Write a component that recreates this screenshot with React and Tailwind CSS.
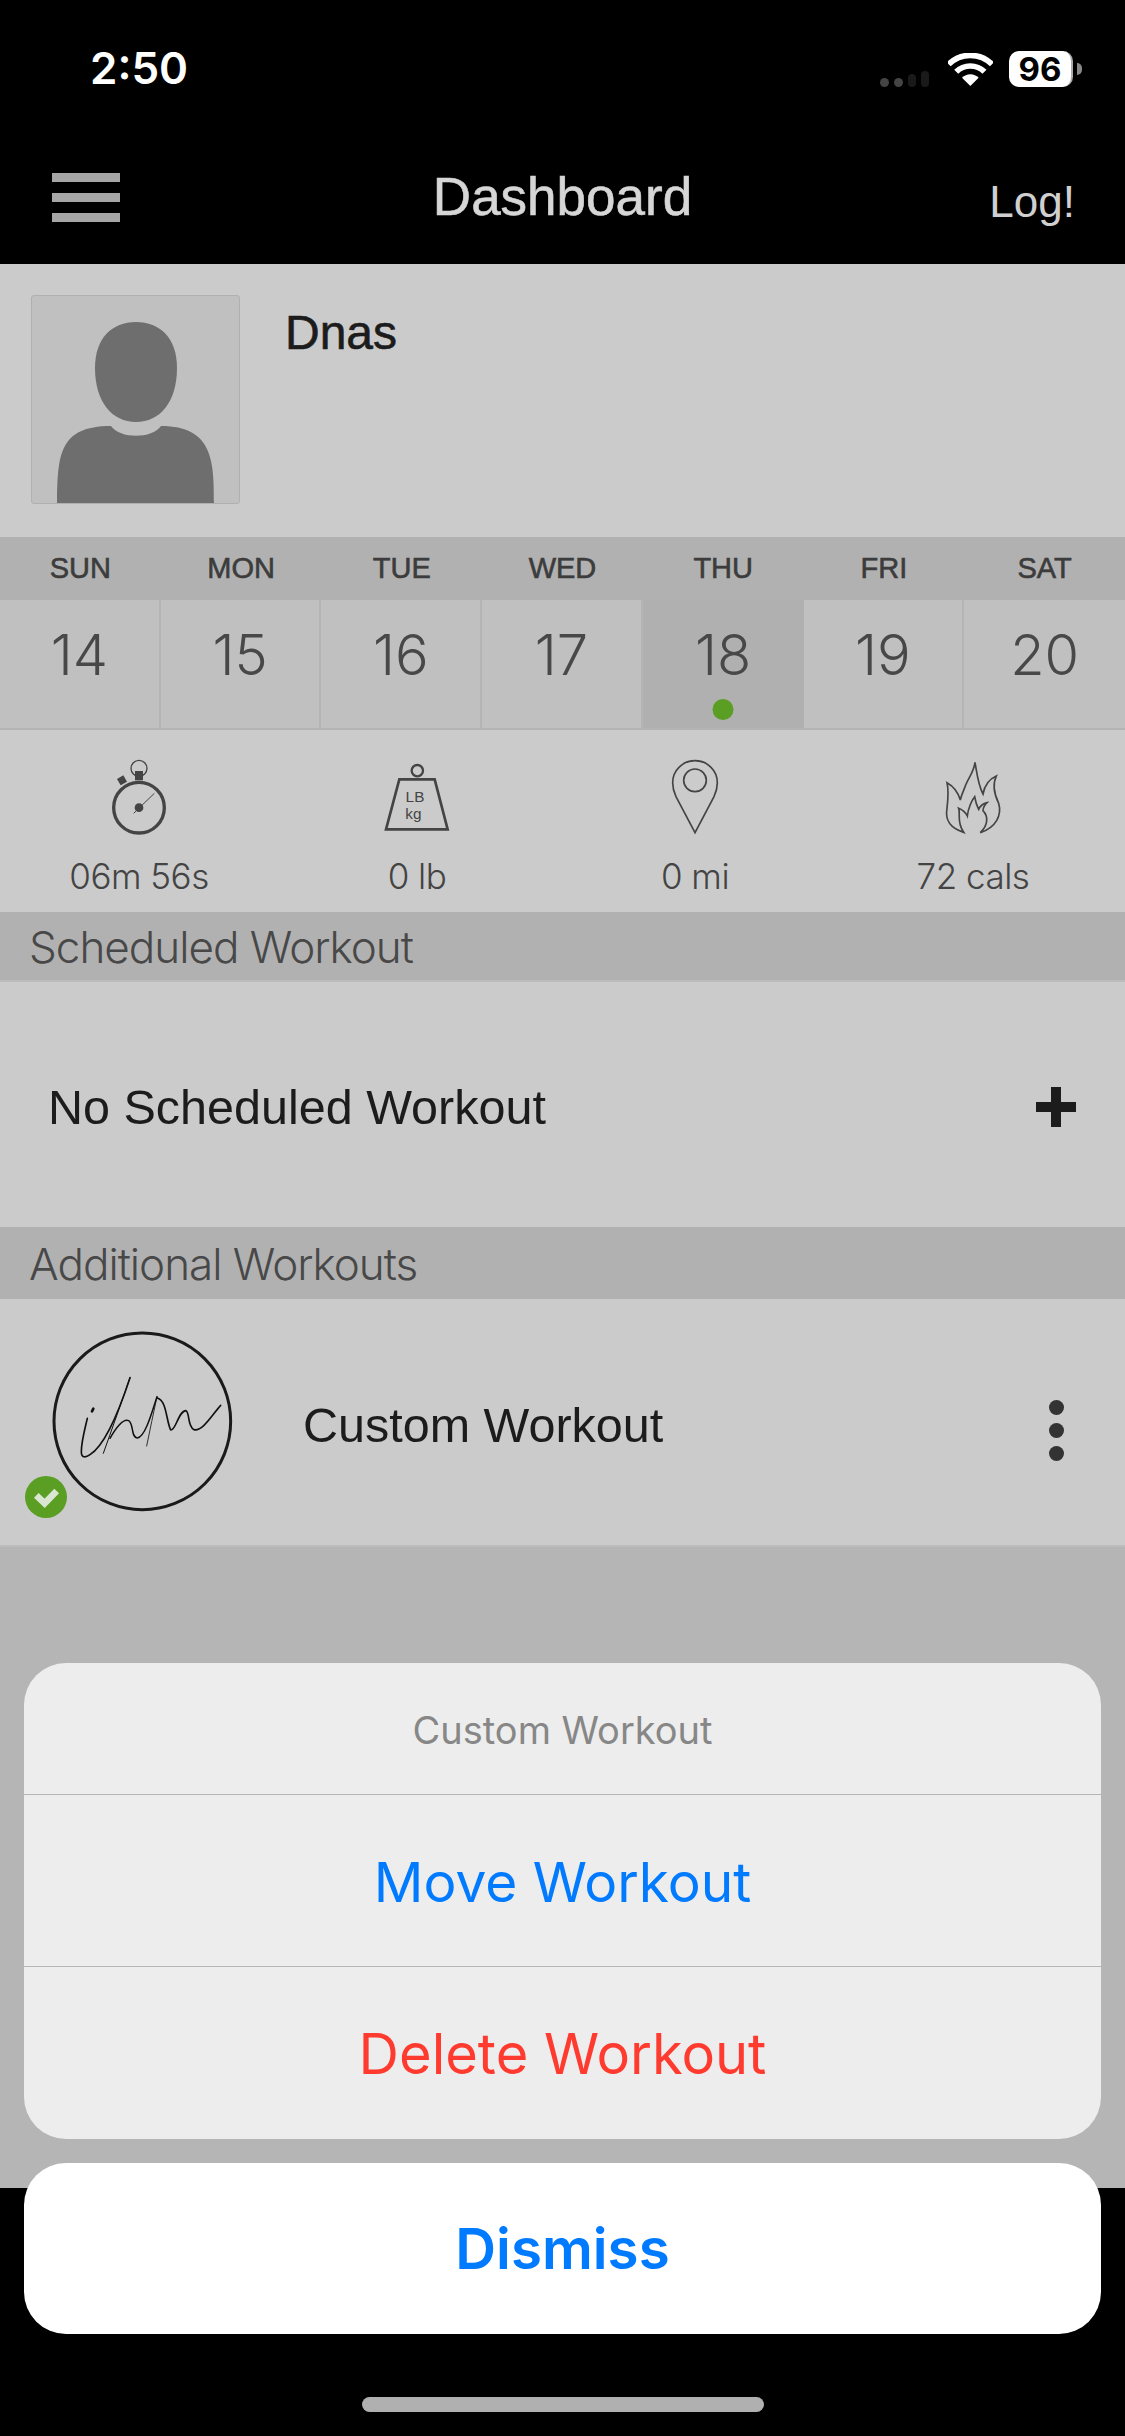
const days = [
  ["SUN", 14],
  ["MON", 15],
  ["TUE", 16],
  ["WED", 17],
  ["THU", 18],
  ["FRI", 19],
  ["SAT", 20],
];

function Wifi() {
  return (
    <svg width="45" height="33" viewBox="295 66 135 99" fill="none">
      <path d="M362 165 L337 140 A35 35 0 0 1 387 140 Z" fill="#fff" />
      <path d="M319.6 122.6 A60 60 0 0 1 404.4 122.6" stroke="#fff" strokeWidth="17" />
      <path d="M297 100 A92 92 0 0 1 427 100" stroke="#fff" strokeWidth="17" />
    </svg>
  );
}

function Stopwatch() {
  return (
    <svg width="100" height="80" viewBox="84 45 300 240" fill="none" stroke="#444">
      <circle cx="234" cy="203" r="76" strokeWidth="10" />
      <circle cx="234" cy="85" r="24" strokeWidth="4" />
      <rect x="222" y="93" width="24" height="28" fill="#444" stroke="none" />
      <rect x="172" y="110" width="22" height="22" transform="rotate(-30 183 121)" fill="#444" stroke="none" />
      <path d="M218 220 L280 160" strokeWidth="3" />
      <circle cx="234" cy="203" r="13" fill="#444" stroke="none" />
    </svg>
  );
}

function Weight() {
  return (
    <svg width="100" height="80" viewBox="923 45 300 240" fill="none" stroke="#444">
      <circle cx="1074" cy="92" r="17" strokeWidth="7" />
      <path d="M1020 118 H1126 L1165 268 H980 Z" strokeWidth="8" />
      <text x="1067" y="187" textAnchor="middle" fill="#444" stroke="none" fontFamily="Liberation Sans, sans-serif" fontSize="46">LB</text>
      <text x="1062" y="237" textAnchor="middle" fill="#444" stroke="none" fontFamily="Liberation Sans, sans-serif" fontSize="46">kg</text>
    </svg>
  );
}

function Pin() {
  return (
    <svg width="100" height="80" viewBox="138 45 300 240" fill="none" stroke="#444" strokeWidth="5">
      <path d="M288 278 L231 170 C224 155 221 143 221 128 C221 91 251 62 288 62 C325 62 355 91 355 128 C355 143 352 155 345 170 Z" />
      <circle cx="288" cy="121" r="34" />
    </svg>
  );
}

function Flame() {
  return (
    <svg width="100" height="80" viewBox="975 45 300 240" fill="none" stroke="#444" strokeWidth="5" strokeLinejoin="miter">
      <path d="M1097 277 C1060 265 1040 245 1047 205 C1050 180 1052 150 1047 128 C1065 138 1080 155 1087 180 C1090 165 1098 150 1103 135 C1113 110 1128 95 1131 67 C1137 100 1140 135 1155 162 C1160 135 1172 118 1195 108 C1182 135 1190 165 1202 190 C1212 225 1195 262 1147 278 C1170 255 1172 230 1155 212 C1155 200 1160 195 1167 188 C1155 190 1145 200 1142 208 C1135 195 1132 182 1130 170 C1122 180 1110 205 1108 228 C1103 218 1095 210 1082 205 C1088 220 1075 245 1097 277 Z" />
    </svg>
  );
}

function Signature() {
  return (
    <svg width="250" height="230" viewBox="0 0 750 690" fill="none" className="shrink-0">
      <circle cx="397" cy="334" r="265" stroke="#1a1a1a" strokeWidth="9" />
      <g stroke="#111" strokeLinecap="round" strokeLinejoin="round">
        <path d="M250 296 L246 304" strokeWidth="8" />
        <path d="M232 325 C224 360 214 395 214 425 C214 444 226 444 240 434 C285 405 325 310 360 203" strokeWidth="5" />
        <path d="M360 203 C335 275 305 360 280 430" strokeWidth="3" />
        <path d="M300 385 C320 350 340 325 356 332 C372 342 362 382 382 384 C405 382 425 310 441 260" strokeWidth="4.5" />
        <path d="M441 260 C430 310 420 360 410 408" strokeWidth="2.5" />
        <path d="M441 264 C470 270 468 330 482 360 C498 362 505 302 528 302 C540 310 532 350 552 359 C578 365 608 312 632 286" strokeWidth="5" />
      </g>
      <circle cx="108" cy="561" r="63" fill="#5a9e24" />
      <path d="M79 556 L104 580 L140 543" stroke="#dbe6d2" strokeWidth="20" />
    </svg>
  );
}

function Stat({ icon, label }) {
  return (
    <div className="flex flex-col items-center">
      {icon}
      <div className="mt-[21px] text-[35px] leading-[40px] font-light text-[#444] font-['Inter',sans-serif] tracking-[-0.5px]">{label}</div>
    </div>
  );
}

function SectionHead({ children, h, pad }) {
  return (
    <div className={`${h} bg-[#b1b1b1] flex items-center pl-[29px] text-[44px] font-light text-[#484848] font-['Inter',sans-serif] tracking-[-1px]`}>
      <span className={pad}>{children}</span>
    </div>
  );
}

export default function App() {
  return (
    <div className="relative w-[1125px] h-[2436px] bg-black overflow-hidden flex flex-col font-['Liberation_Sans',sans-serif]">
      {/* status bar */}
      <div className="h-[136px] shrink-0 pt-[44px] pl-[90px] pr-[43px] flex items-start justify-between">
        <div className="text-[44px] leading-[48px] font-semibold text-white font-['Inter',sans-serif]">2:50</div>
        <div className="flex items-center mt-[7px]">
          <div className="flex items-end gap-[5px] mr-[19px] mt-[20px]">
            <div className="w-[9px] h-[9px] rounded-full bg-[#444]" />
            <div className="w-[9px] h-[9px] rounded-full bg-[#444]" />
            <div className="w-[8px] h-[13px] rounded-full bg-[#1a1a1a]" />
            <div className="w-[8px] h-[16px] rounded-full bg-[#1a1a1a]" />
          </div>
          <Wifi />
          <div className="ml-[16px] w-[64px] h-[36px] rounded-[10px] bg-white flex items-center justify-center text-[33px] font-bold text-black font-['Inter',sans-serif] leading-none border-r-2 border-[#aaa]">
            96
          </div>
          <div className="ml-[4px] w-[5px] h-[12px] rounded-r-full bg-[#888]" />
        </div>
      </div>
      {/* nav bar */}
      <div className="h-[128px] shrink-0 relative flex items-center justify-between pl-[52px] pr-[50px]">
        <div className="flex flex-col gap-[11px] mt-[-6px]">
          <div className="w-[68px] h-[9px] bg-[#a6a6a6]" />
          <div className="w-[68px] h-[9px] bg-[#a6a6a6]" />
          <div className="w-[68px] h-[9px] bg-[#a6a6a6]" />
        </div>
        <div className="absolute left-0 right-0 top-[35px] text-center text-[53px] leading-[52px] text-[#d6d6d6] [-webkit-text-stroke:0.6px_#d6d6d6]">Dashboard</div>
        <div className="text-[44px] leading-[44px] text-[#d0d0d0] mt-[4px]">Log!</div>
      </div>
      {/* profile */}
      <div className="h-[273px] shrink-0 bg-[#cbcbcb] pl-[31px] pt-[31px] flex items-start">
        <div className="w-[209px] h-[209px] bg-[#c0c0c0] border border-[#b0b0b0] rounded-[3px] overflow-hidden">
          <svg width="207" height="207" viewBox="0 0 207 207">
            <path d="M104 26 C128 26 145 42 145 72 C145 106 128 126 104 126 C80 126 63 106 63 72 C63 42 80 26 104 26 Z" fill="#6e6e6e" />
            <path d="M25 207 C26 160 26 130 79 130 C88 143 120 143 129 130 C181 130 182 165 182 207 Z" fill="#6e6e6e" />
          </svg>
        </div>
        <div className="ml-[45px] mt-[13px] text-[48px] leading-[50px] text-[#1c1c1c] [-webkit-text-stroke:0.6px_#1c1c1c]">Dnas</div>
      </div>
      {/* calendar */}
      <div className="shrink-0 grid grid-cols-7 h-[63px] bg-[#b1b1b1]">
        {days.map(([d]) => (
          <div key={d} className="flex items-center justify-center text-[29px] text-[#3c3c3c] [-webkit-text-stroke:0.6px_#3c3c3c] mt-[1px]">{d}</div>
        ))}
      </div>
      <div className="shrink-0 grid grid-cols-7 h-[130px] bg-[#c0c0c0] border-b-2 border-[#b4b4b4]">
        {days.map(([d, n]) => (
          <div key={d} className={`relative flex justify-center pt-[25px] text-[56px] leading-[60px] font-light text-[#484848] font-['Inter',sans-serif] ${n === 18 ? "bg-[#b0b0b0]" : n === 20 ? "" : "border-r-2 border-[#b4b4b4]"}`}>
            {n}
            {n === 18 && <div className="absolute left-1/2 -translate-x-1/2 bottom-[8px] w-[21px] h-[21px] rounded-full bg-[#5a9e24]" />}
          </div>
        ))}
      </div>
      {/* stats */}
      <div className="shrink-0 h-[182px] bg-[#cbcbcb] grid grid-cols-4 pr-[13px] pt-[25px]">
        <Stat icon={<Stopwatch />} label="06m 56s" />
        <Stat icon={<Weight />} label="0 lb" />
        <Stat icon={<Pin />} label="0 mi" />
        <Stat icon={<Flame />} label="72 cals" />
      </div>
      <SectionHead h="h-[68px] shrink-0" pad="mt-[1px]">Scheduled Workout</SectionHead>
      <div className="shrink-0 h-[247px] bg-[#cbcbcb] border-t-2 border-[#bcbcbc] flex items-center justify-between pl-[48px] pr-[49px]">
        <div className="text-[48.5px] text-[#1c1c1c] leading-[52px] mt-[4px]">No Scheduled Workout</div>
        <svg width="40" height="40" viewBox="0 0 40 40" className="mt-[4px]">
          <path d="M15 0 H25 V15 H40 V25 H25 V40 H15 V25 H0 V15 H15 Z" fill="#1c1c1c" />
        </svg>
      </div>
      <SectionHead h="h-[72px] shrink-0" pad="mt-[2px]">Additional Workouts</SectionHead>
      <div className="shrink-0 h-[248px] bg-[#cbcbcb] border-b-2 border-[#bcbcbc] flex items-start pl-[10px] pt-[11px] pr-[61px]">
        <Signature />
        <div className="ml-[43px] mt-[89px] text-[48.5px] leading-[52px] text-[#1c1c1c]">Custom Workout</div>
        <div className="ml-auto mt-[90px] flex flex-col gap-[8px]">
          <div className="w-[15px] h-[15px] rounded-full bg-[#333]" />
          <div className="w-[15px] h-[15px] rounded-full bg-[#333]" />
          <div className="w-[15px] h-[15px] rounded-full bg-[#333]" />
        </div>
      </div>
      <div className="h-[641px] shrink-0 bg-[#b5b5b5]" />

      {/* action sheet */}
      <div className="absolute left-[24px] top-[1663px] w-[1077px] rounded-[42px] bg-[#ededed] flex flex-col font-['Inter',sans-serif] text-center">
        <div className="h-[132px] pt-[3px] flex items-center justify-center text-[38px] text-[#878787] border-b border-[#b5b5b5]">Custom Workout</div>
        <div className="h-[172px] pt-[3px] flex items-center justify-center text-[55px] text-[#007aff] border-b border-[#b5b5b5]">Move Workout</div>
        <div className="h-[172px] pt-[2px] flex items-center justify-center text-[56px] text-[#ff3b30]">Delete Workout</div>
      </div>
      <div className="absolute left-[24px] top-[2163px] w-[1077px] h-[171px] pt-[2px] rounded-[42px] bg-white flex items-center justify-center text-[56.5px] font-semibold text-[#007aff] font-['Inter',sans-serif]">Dismiss</div>
      <div className="absolute left-[362px] top-[2397px] w-[402px] h-[15px] rounded-full bg-[#b0b0b0]" />
    </div>
  );
}
